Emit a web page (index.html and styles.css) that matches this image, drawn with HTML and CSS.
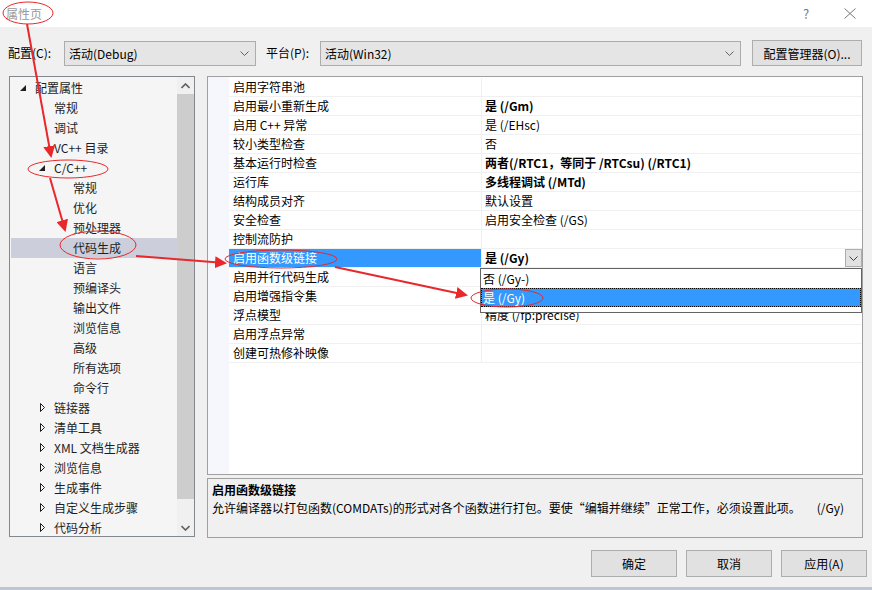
FILE: index.html
```html
<!DOCTYPE html>
<html>

<head>
    <meta charset="UTF-8">
    <title>属性页</title>
    <link rel="stylesheet" href="styles.css">
</head>

<body>
    <div class="titlebar">
        <span class="title">属性页</span>
        <span class="ctl help">?</span>
        <span class="ctl close">
            <svg width="12" height="11" viewBox="0 0 12 11"><path d="M0.5 0.5 L11.5 10.5 M11.5 0.5 L0.5 10.5" stroke="#777" stroke-width="1" fill="none"/></svg>
        </span>
    </div>

    <div class="toolbar">
        <span class="lbl lbl_cfg">配置(C):</span>
        <div class="combo combo_cfg">
            <span class="combo_txt">活动(Debug)</span>
            <svg class="chev" width="9" height="5" viewBox="0 0 9 5"><path d="M0.5 0.5 L4.5 4.5 L8.5 0.5" stroke="#606060" fill="none"/></svg>
        </div>
        <span class="lbl lbl_plat">平台(P):</span>
        <div class="combo combo_plat">
            <span class="combo_txt">活动(Win32)</span>
            <svg class="chev" width="9" height="5" viewBox="0 0 9 5"><path d="M0.5 0.5 L4.5 4.5 L8.5 0.5" stroke="#606060" fill="none"/></svg>
        </div>
        <button class="btn btn_mgr">配置管理器(O)...</button>
    </div>

    <div class="main">
        <!-- 左侧树 -->
        <div class="tree">
            <div class="tree_list">
                <div class="node lv0"><span class="tw"><svg width="7" height="7" viewBox="0 0 7 7"><path d="M6 0 L6 6 L0 6 Z" fill="#1e1e1e"/></svg></span>配置属性</div>
                <div class="node lv1"><span class="tw"></span>常规</div>
                <div class="node lv1"><span class="tw"></span>调试</div>
                <div class="node lv1"><span class="tw"></span>VC++ 目录</div>
                <div class="node lv1"><span class="tw"><svg width="7" height="7" viewBox="0 0 7 7"><path d="M6 0 L6 6 L0 6 Z" fill="#1e1e1e"/></svg></span>C/C++</div>
                <div class="node lv2"><span class="tw"></span>常规</div>
                <div class="node lv2"><span class="tw"></span>优化</div>
                <div class="node lv2"><span class="tw"></span>预处理器</div>
                <div class="node lv2 on"><span class="tw"></span>代码生成</div>
                <div class="node lv2"><span class="tw"></span>语言</div>
                <div class="node lv2"><span class="tw"></span>预编译头</div>
                <div class="node lv2"><span class="tw"></span>输出文件</div>
                <div class="node lv2"><span class="tw"></span>浏览信息</div>
                <div class="node lv2"><span class="tw"></span>高级</div>
                <div class="node lv2"><span class="tw"></span>所有选项</div>
                <div class="node lv2"><span class="tw"></span>命令行</div>
                <div class="node lv1"><span class="tw"><svg class="closed" width="6" height="10" viewBox="0 0 6 10"><path d="M0.5 0.5 L0.5 8.5 L4.5 4.5 Z" stroke="#1e1e1e" fill="none"/></svg></span>链接器</div>
                <div class="node lv1"><span class="tw"><svg class="closed" width="6" height="10" viewBox="0 0 6 10"><path d="M0.5 0.5 L0.5 8.5 L4.5 4.5 Z" stroke="#1e1e1e" fill="none"/></svg></span>清单工具</div>
                <div class="node lv1"><span class="tw"><svg class="closed" width="6" height="10" viewBox="0 0 6 10"><path d="M0.5 0.5 L0.5 8.5 L4.5 4.5 Z" stroke="#1e1e1e" fill="none"/></svg></span>XML 文档生成器</div>
                <div class="node lv1"><span class="tw"><svg class="closed" width="6" height="10" viewBox="0 0 6 10"><path d="M0.5 0.5 L0.5 8.5 L4.5 4.5 Z" stroke="#1e1e1e" fill="none"/></svg></span>浏览信息</div>
                <div class="node lv1"><span class="tw"><svg class="closed" width="6" height="10" viewBox="0 0 6 10"><path d="M0.5 0.5 L0.5 8.5 L4.5 4.5 Z" stroke="#1e1e1e" fill="none"/></svg></span>生成事件</div>
                <div class="node lv1"><span class="tw"><svg class="closed" width="6" height="10" viewBox="0 0 6 10"><path d="M0.5 0.5 L0.5 8.5 L4.5 4.5 Z" stroke="#1e1e1e" fill="none"/></svg></span>自定义生成步骤</div>
                <div class="node lv1"><span class="tw"><svg class="closed" width="6" height="10" viewBox="0 0 6 10"><path d="M0.5 0.5 L0.5 8.5 L4.5 4.5 Z" stroke="#1e1e1e" fill="none"/></svg></span>代码分析</div>
            </div>
            <div class="vscroll">
                <div class="sb_btn"><svg width="9" height="6" viewBox="0 0 9 6"><path d="M0.5 5 L4.5 1 L8.5 5" stroke="#606060" stroke-width="1.6" fill="none"/></svg></div>
                <div class="sb_thumb"></div>
                <div class="sb_track"></div>
                <div class="sb_btn"><svg width="9" height="6" viewBox="0 0 9 6"><path d="M0.5 1 L4.5 5 L8.5 1" stroke="#606060" stroke-width="1.6" fill="none"/></svg></div>
            </div>
        </div>

        <div class="right">
            <!-- 属性表格 -->
            <div class="grid">
                <div class="gutter"></div>
                <div class="props">
                    <div class="prop"><div class="name">启用字符串池</div><div class="val"></div></div>
                    <div class="prop"><div class="name">启用最小重新生成</div><div class="val b">是 (/Gm)</div></div>
                    <div class="prop"><div class="name">启用 C++ 异常</div><div class="val">是 (/EHsc)</div></div>
                    <div class="prop"><div class="name">较小类型检查</div><div class="val">否</div></div>
                    <div class="prop"><div class="name">基本运行时检查</div><div class="val b">两者(/RTC1，等同于 /RTCsu) (/RTC1)</div></div>
                    <div class="prop"><div class="name">运行库</div><div class="val b">多线程调试 (/MTd)</div></div>
                    <div class="prop"><div class="name">结构成员对齐</div><div class="val">默认设置</div></div>
                    <div class="prop"><div class="name">安全检查</div><div class="val">启用安全检查 (/GS)</div></div>
                    <div class="prop"><div class="name">控制流防护</div><div class="val"></div></div>
                    <div class="prop sel"><div class="name">启用函数级链接</div><div class="val b"><span class="val_txt">是 (/Gy)</span><span class="dd_btn"><svg width="9" height="5" viewBox="0 0 9 5"><path d="M0.5 0.5 L4.5 4.5 L8.5 0.5" stroke="#404040" fill="none"/></svg></span></div></div>
                    <div class="prop"><div class="name">启用并行代码生成</div><div class="val"></div></div>
                    <div class="prop"><div class="name">启用增强指令集</div><div class="val"></div></div>
                    <div class="prop"><div class="name">浮点模型</div><div class="val">精度 (/fp:precise)</div></div>
                    <div class="prop"><div class="name">启用浮点异常</div><div class="val"></div></div>
                    <div class="prop"><div class="name">创建可热修补映像</div><div class="val"></div></div>
                </div>
                <div class="droplist">
                    <div class="opt">否 (/Gy-)</div>
                    <div class="opt on">是 (/Gy)</div>
                </div>
            </div>
            <!-- 说明 -->
            <div class="desc">
                <div class="desc_title">启用函数级链接</div>
                <div class="desc_txt">允许编译器以打包函数(COMDATs)的形式对各个函数进行打包。要使“编辑并继续”正常工作，必须设置此项。<span class="desc_sw">(/Gy)</span></div>
            </div>
        </div>
    </div>

    <div class="footer">
        <button class="btn">确定</button>
        <button class="btn">取消</button>
        <button class="btn">应用(A)</button>
    </div>
    <div class="strip"></div>

    <!-- 红色标注 -->
    <svg class="marks" width="872" height="590" viewBox="0 0 872 590">
        <defs>
            <marker id="head" markerWidth="6" markerHeight="6" refX="5" refY="3" orient="auto" markerUnits="strokeWidth">
                <path d="M0 0 L6 3 L0 6 Z" fill="#e8282b"/>
            </marker>
        </defs>
        <ellipse cx="28" cy="13" rx="25" ry="11" fill="none" stroke="#e8282b" stroke-width="1"/>
        <ellipse cx="68" cy="169" rx="40" ry="9" fill="none" stroke="#e8282b" stroke-width="1"/>
        <ellipse cx="98" cy="245" rx="38" ry="14" fill="none" stroke="#e8282b" stroke-width="1"/>
        <ellipse cx="281" cy="259" rx="56" ry="9" fill="none" stroke="#e8282b" stroke-width="1"/>
        <ellipse cx="507" cy="298" rx="36" ry="9" fill="none" stroke="#e8282b" stroke-width="1"/>
        <line x1="27" y1="24" x2="51" y2="156" stroke="#e8282b" stroke-width="2" marker-end="url(#head)"/>
        <line x1="50" y1="178" x2="65" y2="230" stroke="#e8282b" stroke-width="2" marker-end="url(#head)"/>
        <line x1="136" y1="256" x2="225" y2="263" stroke="#e8282b" stroke-width="2" marker-end="url(#head)"/>
        <line x1="335" y1="267" x2="466" y2="295" stroke="#e8282b" stroke-width="2" marker-end="url(#head)"/>
    </svg>
</body>

</html>
```

FILE: styles.css
```css
body {
    margin: 0;
    width: 872px;
    height: 590px;
    overflow: hidden;
    position: relative;
    background-color: #F0F0F0;
    font-family: "Noto Sans CJK SC", sans-serif;
    font-size: 12px;
    color: #000;
}

.titlebar {
    height: 27px;
    background-color: #FFF;
    display: flex;
    align-items: center;
    padding-left: 6px;
    box-sizing: border-box;
}

.title {
    flex: 1;
    color: #999;
    line-height: 24px;
}

.ctl {
    width: 44px;
    text-align: center;
    color: #777;
    font-size: 13px;
    display: flex;
    justify-content: center;
    align-items: center;
}

.toolbar {
    height: 49px;
    box-sizing: border-box;
    padding: 13px 0 0 8px;
    display: flex;
    align-items: flex-start;
}

.lbl {
    line-height: 26px;
}

.lbl_cfg {
    width: 56px;
}

.lbl_plat {
    width: 54px;
    margin-left: 10px;
}

.combo {
    height: 25px;
    margin-top: 1px;
    box-sizing: border-box;
    border: 1px solid #ACACAC;
    background-color: #E5E5E5;
    display: flex;
    align-items: center;
    padding: 0 6px 0 4px;
}

.combo_txt {
    flex: 1;
}

.combo_cfg {
    width: 192px;
}

.combo_plat {
    width: 421px;
}

.btn {
    font-family: inherit;
    font-size: 12px;
    color: #000;
    background-color: #E1E1E1;
    border: 1px solid #ADADAD;
    padding: 0;
    height: 27px;
    width: 86px;
}

.btn_mgr {
    width: 110px;
    height: 26px;
    margin-left: 11px;
}

.main {
    display: flex;
    gap: 12px;
    padding-left: 9px;
    height: 462px;
}

.tree {
    width: 186px;
    height: 461px;
    box-sizing: border-box;
    border: 1px solid #828790;
    background-color: #F5F5F5;
    display: flex;
    overflow: hidden;
}

.tree_list {
    flex: 1;
    padding-top: 1px;
}

.node {
    height: 20px;
    line-height: 20px;
    display: flex;
    align-items: center;
    white-space: nowrap;
    color: #1E1E1E;
}

.node.on {
    background-color: #CCCEDB;
    margin-left: 1px;
    padding-left: 45px !important;
}

.lv0 {
    padding-left: 8px;
}

.lv1 {
    padding-left: 27px;
}

.lv2 {
    padding-left: 46px;
}

.tw {
    width: 17px;
    height: 20px;
    display: flex;
    align-items: center;
    padding-left: 2px;
    box-sizing: border-box;
}

.tw svg.closed {
    margin-left: 1px;
}

.vscroll {
    width: 17px;
    display: flex;
    flex-direction: column;
    background-color: #F0F0F0;
}

.sb_btn {
    height: 17px;
    display: flex;
    align-items: center;
    justify-content: center;
}

.sb_thumb {
    height: 405px;
    background-color: #CDCDCD;
}

.sb_track {
    flex: 1;
}

.right {
    width: 656px;
    display: flex;
    flex-direction: column;
    gap: 3px;
}

.grid {
    position: relative;
    height: 399px;
    box-sizing: border-box;
    border: 1px solid #A0A0A0;
    background-color: #FFF;
    display: flex;
}

.gutter {
    width: 21px;
    background-color: #F5F7FC;
}

.props {
    flex: 1;
    padding-top: 1px;
}

.prop {
    display: flex;
    height: 19px;
    box-sizing: border-box;
    border-bottom: 1px solid #F0F0F0;
    line-height: 18px;
}

.name {
    width: 253px;
    box-sizing: border-box;
    padding-left: 4px;
    border-right: 1px solid #F0F0F0;
    white-space: nowrap;
}

.val {
    flex: 1;
    padding-left: 3px;
    display: flex;
    white-space: nowrap;
}

.b {
    font-weight: bold;
}

.sel .name {
    background-color: #3399FF;
    color: #FFF;
}

.val_txt {
    flex: 1;
}

.dd_btn {
    width: 17px;
    height: 18px;
    box-sizing: border-box;
    border: 1px solid #ADADAD;
    background-color: #E1E1E1;
    display: flex;
    align-items: center;
    justify-content: center;
}

.droplist {
    position: absolute;
    left: 272px;
    top: 191px;
    width: 382px;
    height: 45px;
    box-sizing: border-box;
    border: 1px solid #646464;
    background-color: #FFF;
}

.opt {
    height: 19px;
    line-height: 19px;
    padding-left: 2px;
}

.opt.on {
    background-color: #3399FF;
    color: #FFF;
    outline: 1px dotted #000;
    outline-offset: -1px;
}

.desc {
    height: 60px;
    box-sizing: border-box;
    border: 1px solid #A0A0A0;
    background-color: #F0F0F0;
    padding: 2px 0 0 4px;
}

.desc_title {
    font-weight: bold;
    line-height: 18px;
}

.desc_txt {
    line-height: 18px;
    white-space: nowrap;
}

.desc_sw {
    margin-left: 16px;
}

.footer {
    display: flex;
    justify-content: flex-end;
    gap: 9px;
    margin-top: 12px;
    padding-right: 5px;
}

.strip {
    margin-top: 10px;
    height: 3px;
    background-color: #BCC6D6;
}

.marks {
    position: absolute;
    left: 0;
    top: 0;
    pointer-events: none;
}
```
